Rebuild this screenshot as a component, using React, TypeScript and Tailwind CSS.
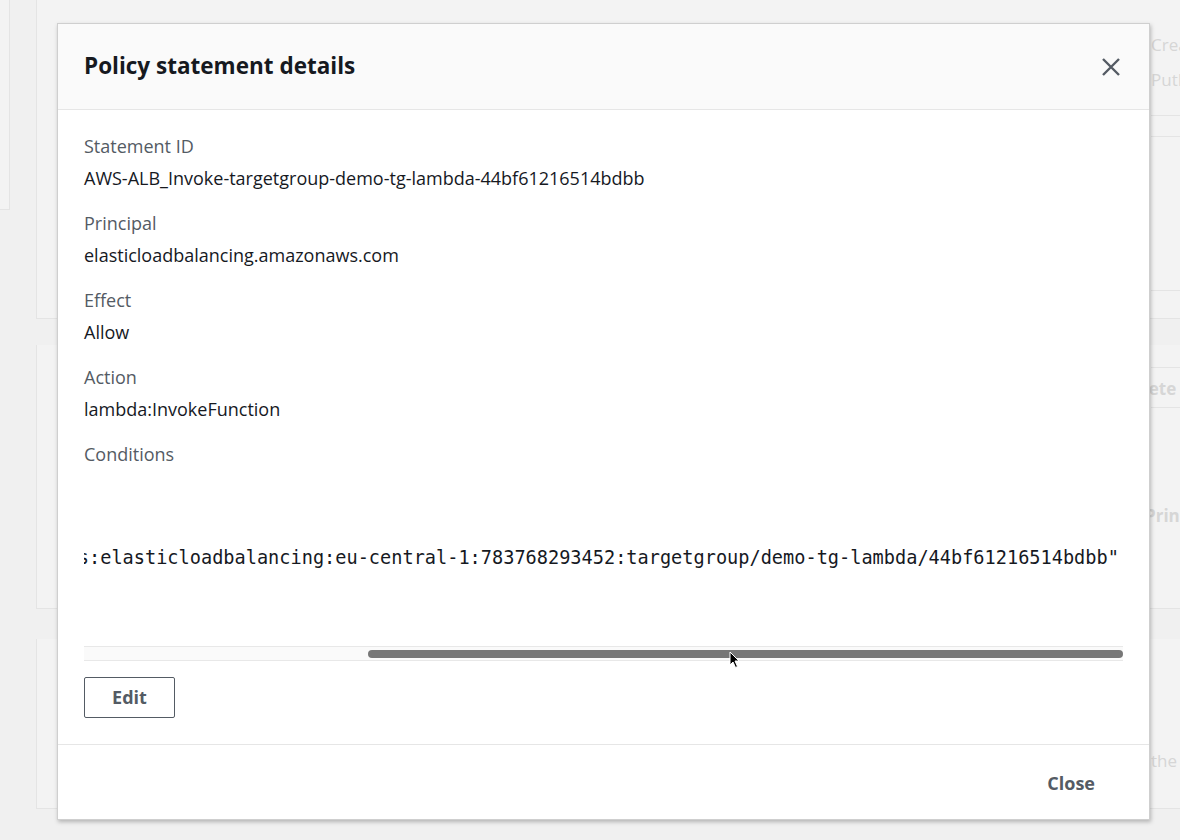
import React from "react";

const fields = [
  { label: "Statement ID", value: "AWS-ALB_Invoke-targetgroup-demo-tg-lambda-44bf61216514bdbb" },
  { label: "Principal", value: "elasticloadbalancing.amazonaws.com" },
  { label: "Effect", value: "Allow" },
  { label: "Action", value: "lambda:InvokeFunction" },
];

const condition =
  '{"ArnLike":{"AWS:SourceArn":"arn:aws:elasticloadbalancing:eu-central-1:783768293452:targetgroup/demo-tg-lambda/44bf61216514bdbb"';

const Background = () => {
  return (
    <div className="flex h-[840px] w-full bg-[#f0f0f0] text-[17px] text-[#d6d6d6]">
      <div className="h-[210px] w-[10px] shrink-0 border-r border-b border-[#e4e4e4] bg-[#f3f3f3]" />
      <div className="ml-[26px] flex flex-1 flex-col">
        <div className="h-[319px] border-b border-l border-[#e4e4e4] bg-[#f3f3f3]">
          <div className="flex flex-col pl-[1114px]">
            <span className="mt-[33px] leading-6">Crea</span>
            <span className="mt-[11px] leading-6">PutI</span>
            <div className="mt-[23px] h-[22px] border-t border-b border-[#e4e4e4]" />
            <div className="h-[154px] border-b border-[#e4e4e4]" />
          </div>
        </div>
        <div className="mt-[26px] h-[264px] border-b border-l border-[#e4e4e4] bg-[#f3f3f3]">
          <div className="flex flex-col">
            <div className="ml-[1114px] h-[23px] border-b border-[#e4e4e4]" />
            <span className="ml-[1084px] mt-[9px] font-bold leading-6">Delete</span>
            <div className="ml-[1114px] mt-[6px] border-b border-[#e4e4e4]" />
            <span className="ml-[1108px] mt-[96px] font-bold leading-6">Prin</span>
          </div>
        </div>
        <div className="mt-[30px] h-[170px] border-b border-l border-[#e4e4e4] bg-[#f3f3f3]">
          <div className="flex flex-col pl-[1114px]">
            <span className="mt-[110px] leading-6">the</span>
          </div>
        </div>
      </div>
    </div>
  );
};

const App = () => {
  return (
    <div className="relative h-[840px] w-[1180px] overflow-hidden font-['Open_Sans',sans-serif]">
      <Background />

      <div className="absolute left-[57px] top-[23px] flex h-[797px] w-[1093px] flex-col border border-[#cfcfcf] bg-white shadow-[1px_2px_4px_rgba(0,0,0,0.25)]">
        <div className="flex h-[86px] shrink-0 items-center justify-between border-b border-[#e6e6e6] bg-[#fafafa] px-[26px]">
          <h1 className="-mt-[2px] text-[22.5px] font-bold text-[#16191f]">Policy statement details</h1>
          <svg width="20" height="20" viewBox="0 0 20 20" className="mr-[2px]">
            <path d="M2 2 L18 18 M18 2 L2 18" stroke="#545b64" strokeWidth="2.4" fill="none" />
          </svg>
        </div>

        <div className="flex flex-1 flex-col px-[26px] pt-[20px]">
          <div className="flex flex-col gap-[13px]">
            {fields.map((f) => (
              <div key={f.label} className="flex flex-col text-[18px] leading-[32px]">
                <span className="text-[#545b64]">{f.label}</span>
                <span className="text-[#16191f]">{f.value}</span>
              </div>
            ))}
            <span className="text-[18px] leading-[32px] text-[#545b64]">Conditions</span>
          </div>

          <div className="overflow-hidden">
            <pre className="ml-[-398px] mt-[76px] font-['DejaVu_Sans_Mono',monospace] text-[18.6px] leading-6 text-[#16191f]">
              {condition}
            </pre>
          </div>

          <div className="relative mt-[76px] flex h-[15px] items-center border-t border-b border-[#e8e8e8] bg-[#fafafa]">
            <div className="ml-[284px] mt-[1px] h-[8px] w-[755px] rounded-full bg-[#777777]" />
            <svg width="12" height="18" viewBox="0 0 12 18" className="absolute left-[645px] top-[4px]">
              <path d="M1 1 L1 14 L4 11 L6.5 16.5 L8.5 15.5 L6 10 L10 10 Z" fill="#000" stroke="#fff" strokeWidth="1" />
            </svg>
          </div>

          <div className="mt-[16px]">
            <button className="h-[41px] w-[91px] rounded-[2px] border border-[#545b64] bg-white text-[18px] font-bold text-[#545b64]">
              Edit
            </button>
          </div>
        </div>

        <div className="flex h-[75px] shrink-0 items-center justify-end border-t border-[#e6e6e6] px-[54px]">
          <span className="mt-[2px] text-[18px] font-bold text-[#545b64]">Close</span>
        </div>
      </div>
    </div>
  );
};

export default App;
